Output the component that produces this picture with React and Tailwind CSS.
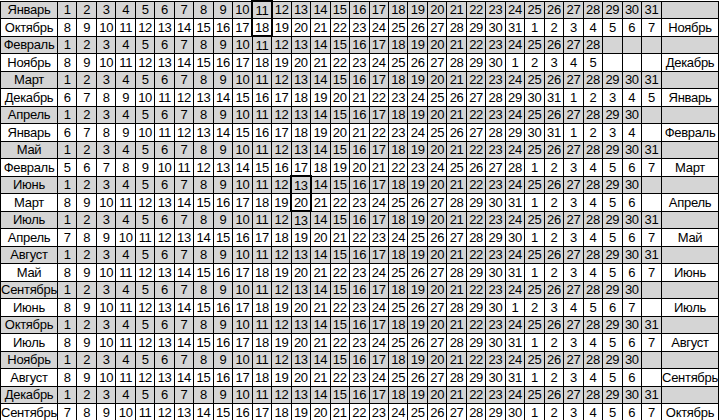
import React from "react";

const range = (a, b) => {
  const r = [];
  for (let i = a; i <= b; i++) r.push(i);
  return r;
};

const pairs = [
  { a: "Январь", n: 31, b: "Октябрь", vals: [...range(8, 31), ...range(1, 7)], c: "Ноябрь" },
  { a: "Февраль", n: 28, b: "Ноябрь", vals: [...range(8, 30), ...range(1, 5)], c: "Декабрь" },
  { a: "Март", n: 31, b: "Декабрь", vals: [...range(6, 31), ...range(1, 5)], c: "Январь" },
  { a: "Апрель", n: 30, b: "Январь", vals: [...range(6, 31), ...range(1, 4)], c: "Февраль" },
  { a: "Май", n: 31, b: "Февраль", vals: [...range(5, 28), ...range(1, 7)], c: "Март" },
  { a: "Июнь", n: 30, b: "Март", vals: [...range(8, 31), ...range(1, 6)], c: "Апрель" },
  { a: "Июль", n: 31, b: "Апрель", vals: [...range(7, 30), ...range(1, 7)], c: "Май" },
  { a: "Август", n: 31, b: "Май", vals: [...range(8, 31), ...range(1, 7)], c: "Июнь" },
  { a: "Сентябрь", n: 30, b: "Июнь", vals: [...range(8, 30), ...range(1, 7)], c: "Июль" },
  { a: "Октябрь", n: 31, b: "Июль", vals: [...range(8, 31), ...range(1, 7)], c: "Август" },
  { a: "Ноябрь", n: 30, b: "Август", vals: [...range(8, 31), ...range(1, 6)], c: "Сентябрь" },
  { a: "Декабрь", n: 31, b: "Сентябрь", vals: [...range(7, 30), ...range(1, 7)], c: "Октябрь" },
];

// highlighted: pair index 0 col 11, pair index 5 col 13
const highlight = { 0: 11, 5: 13 };

const cell = "border border-black text-center p-0 leading-none align-middle overflow-visible";

export default function App() {
  return (
    <div className="w-[719px] h-[420px] overflow-hidden bg-white">
      <table
        className="table-fixed border-collapse w-[719px] h-[420px] text-black text-[13px] tracking-[-0.3px]"
        style={{ fontFamily: '"Liberation Sans", Arial, sans-serif' }}
      >
        <colgroup>
          <col className="w-[57px]" />
          {range(1, 31).map((i) => (
            <col key={i} />
          ))}
          <col className="w-[57px]" />
        </colgroup>
        <tbody>
          {pairs.map((p, pi) => {
            const hl = highlight[pi];
            return (
              <React.Fragment key={pi}>
                <tr className="h-[17.5px] bg-[#d5d5d5]">
                  <td className={cell + " whitespace-nowrap"}>{p.a}</td>
                  {range(1, 31).map((d) => (
                    <td
                      key={d}
                      className={
                        cell +
                        (hl === d ? " border-x-2 border-t-2" : "")
                      }
                    >
                      {d <= p.n ? d : ""}
                    </td>
                  ))}
                  <td className={cell}></td>
                </tr>
                <tr className="h-[17.5px] bg-white">
                  <td className={cell + " whitespace-nowrap"}>{p.b}</td>
                  {range(1, 31).map((d) => (
                    <td
                      key={d}
                      className={
                        cell +
                        (hl === d ? " border-x-2 border-b-2" : "")
                      }
                    >
                      {p.vals[d - 1] !== undefined ? p.vals[d - 1] : ""}
                    </td>
                  ))}
                  <td className={cell + " whitespace-nowrap"}>{p.c}</td>
                </tr>
              </React.Fragment>
            );
          })}
        </tbody>
      </table>
    </div>
  );
}
